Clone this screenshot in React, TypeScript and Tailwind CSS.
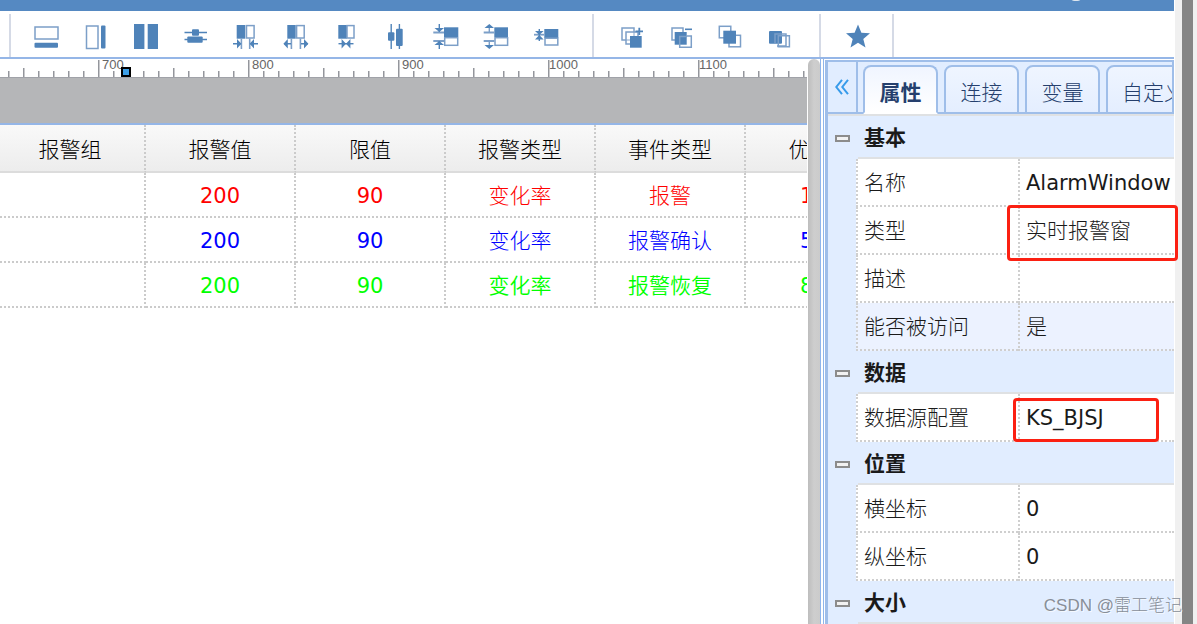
import type { ReactNode } from "react"

const BLUE = "#4f83b9"
const PALE = "#7c9fc8"

const UI_FONT = "font-['DejaVu_Sans','Noto_Sans_CJK_SC',sans-serif]"

type Tool = { name: string; art: ReactNode }

function Outline({ x, y, w, h }: { x: number; y: number; w: number; h: number }) {
  return <rect x={x} y={y} width={w} height={h} fill="#fff" fillOpacity={0.4} stroke={PALE} strokeWidth={1.5} />
}

const ALIGN_TOOLS: Tool[] = [
  {
    name: "等宽",
    art: (
      <>
        <Outline x={2} y={3} w={23} h={12} />
        <rect x={1.5} y={18.7} width={23.5} height={5} rx={1} />
      </>
    ),
  },
  {
    name: "等高",
    art: (
      <>
        <Outline x={3.5} y={2} w={11.5} h={22.5} />
        <rect x={18} y={1.5} width={4.5} height={23} rx={1} />
      </>
    ),
  },
  {
    name: "等大小",
    art: (
      <>
        <rect x={1} y={0} width={10.4} height={25} />
        <rect x={14.7} y={0} width={10.3} height={25} />
      </>
    ),
  },
  {
    name: "水平居中",
    art: (
      <>
        <path d="M1.5 8.5H24M1.5 15.5H24" stroke={BLUE} strokeWidth={1.4} />
        <rect x={9} y={5.3} width={7} height={6.4} rx={1} />
        <rect x={4.3} y={12.5} width={15.4} height={6.2} rx={1} />
      </>
    ),
  },
  {
    name: "水平等间距",
    art: (
      <>
        <rect x={3.7} y={1} width={8.6} height={13.7} />
        <Outline x={13.5} y={1.6} w={7.6} h={12.4} />
        <path d="M8.4 14.5V25M16.7 14.5V25" stroke={PALE} strokeWidth={1.6} />
        <path d="M0 19.7H8M17.5 19.7H25" stroke={BLUE} strokeWidth={1.4} />
        <path d="M4 15L8.4 19.7L4 24.5ZM21 15L16.6 19.7L21 24.5Z" />
      </>
    ),
  },
  {
    name: "增加水平间距",
    art: (
      <>
        <rect x={4.3} y={1} width={8.4} height={13.7} />
        <Outline x={13.6} y={1.6} w={7.6} h={12.4} />
        <path d="M8.4 14.5V25M17.4 14.5V25" stroke={PALE} strokeWidth={1.6} />
        <path d="M1 19.7H8M18 19.7H25" stroke={BLUE} strokeWidth={1.4} />
        <path d="M4.8 15L.4 19.7L4.8 24.5ZM21 15L25.4 19.7L21 24.5Z" />
      </>
    ),
  },
  {
    name: "减少水平间距",
    art: (
      <>
        <rect x={5.3} y={1} width={8.6} height={13.7} />
        <Outline x={14} y={1.6} w={7} h={12.4} />
        <path d="M5.5 19.7H20.5" stroke={BLUE} strokeWidth={1.4} />
        <path d="M8.6 15L13 19.7L8.6 24.5ZM17.4 15L13 19.7L17.4 24.5Z" />
      </>
    ),
  },
  {
    name: "垂直居中",
    art: (
      <>
        <path d="M8.2 0V25M16.4 0V25" stroke={BLUE} strokeWidth={1.4} />
        <rect x={5} y={8.3} width={6.4} height={8.4} rx={1} />
        <rect x={13} y={4.7} width={6.7} height={17.3} rx={1} />
      </>
    ),
  },
  {
    name: "垂直等间距",
    art: (
      <>
        <rect x={11} y={3.3} width={14.3} height={9.7} />
        <Outline x={11.7} y={13.7} w={13} h={7.6} />
        <path d="M.3 8.5H11M.3 17H11" stroke={PALE} strokeWidth={1.8} />
        <path d="M6.3 0V8M6.3 17V25" stroke={BLUE} strokeWidth={1.4} />
        <path d="M1.5 4L6.3 8L11 4ZM1.5 21L6.3 17L11 21Z" />
      </>
    ),
  },
  {
    name: "增加垂直间距",
    art: (
      <>
        <rect x={11.3} y={3.3} width={13.7} height={9.7} />
        <Outline x={12} y={13.7} w={12.6} h={7.6} />
        <path d="M.7 8.5H11.3M.7 17H11.3" stroke={PALE} strokeWidth={1.8} />
        <path d="M6.3 1V8M6.3 17V24" stroke={PALE} strokeWidth={1.4} />
        <path d="M1.5 4L6.3 0L11 4ZM1.5 21L6.3 25L11 21Z" />
      </>
    ),
  },
  {
    name: "减少垂直间距",
    art: (
      <>
        <rect x={11.3} y={5} width={14} height={9} />
        <Outline x={12} y={14.2} w={12.8} h={6.8} />
        <path d="M1 10.7H11" stroke={PALE} strokeWidth={1.8} />
        <path d="M6.3 5V17" stroke={BLUE} strokeWidth={1.4} />
        <path d="M2 7L6.3 11L10.6 7ZM2 15.5L6.3 11L10.6 15.5Z" />
      </>
    ),
  },
]

const LAYER_TOOLS: Tool[] = [
  {
    name: "组合",
    art: (
      <>
        <Outline x={3} y={4} w={12} h={12} />
        <Outline x={7} y={8} w={12} h={12} />
        <rect x={11} y={12} width={11.7} height={11.7} />
        <path d="M16.5 7.3H24M20.3 3.7V11" stroke={BLUE} strokeWidth={1.8} />
      </>
    ),
  },
  {
    name: "取消组合",
    art: (
      <>
        <Outline x={4} y={4} w={11} h={12} />
        <rect x={6.7} y={8} width={12} height={12.7} />
        <path d="M18.7 12H23.3V23.3H11.7V20.5M11.7 20V12.5H18.7" fill="none" stroke={PALE} strokeWidth={1.5} />
        <path d="M17 5.3H24" stroke={BLUE} strokeWidth={1.6} />
      </>
    ),
  },
  {
    name: "上移一层",
    art: (
      <>
        <Outline x={2.3} y={2.3} w={11.5} h={11.5} />
        <Outline x={12} y={11.3} w={11.5} h={11.5} />
        <rect x={6.3} y={6.7} width={12.7} height={13} />
      </>
    ),
  },
  {
    name: "下移一层",
    art: (
      <>
        <rect x={3} y={7} width={13} height={12.7} rx={1} />
        <path d="M9 19.5V10H20V22H11" fill="none" stroke={PALE} strokeWidth={1.5} />
        <path d="M12.3 19V11.7H23.4V22.8H12.3V19" fill="none" stroke={PALE} strokeWidth={1.5} />
      </>
    ),
  },
]

const STAR: Tool = {
  name: "收藏",
  art: <path d="M13 .5L16.4 8.8L25 9.3L18.3 15L20.5 23.5L13 18.8L5.5 23.5L7.7 15L1 9.3L9.6 8.8Z" />,
}

function ToolIcon({ tool, wide }: { tool: Tool; wide?: boolean }) {
  return (
    <button aria-label={tool.name} className={`flex shrink-0 justify-center pt-2.5 ${wide ? "w-[50px]" : "w-[49px]"}`}>
      <svg viewBox="0 0 26 26" className="size-[26px]" fill={BLUE}>
        {tool.art}
      </svg>
    </button>
  )
}

function Divider() {
  return <div className="w-0.5 shrink-0 bg-[#d5dae6]" />
}

function Toolbar() {
  return (
    <div className="flex h-[48px] shrink-0 border-b-2 border-[#95b6e7] bg-white pt-[3px] pl-[9px]">
      <Divider />
      <div className="ml-2.5 flex">
        {ALIGN_TOOLS.map((t) => (
          <ToolIcon key={t.name} tool={t} wide />
        ))}
      </div>
      <div className="ml-[21px] flex">
        <Divider />
      </div>
      <div className="mr-4 ml-[13px] flex">
        {LAYER_TOOLS.map((t) => (
          <ToolIcon key={t.name} tool={t} />
        ))}
      </div>
      <Divider />
      <div className="mr-[9px] ml-3 flex">
        <ToolIcon tool={STAR} wide />
      </div>
      <Divider />
    </div>
  )
}

const MAJOR = [-51, 99, 249, 399, 549, 699]
const STEPS = [0, 1, 2, 3, 4, 5, 6, 7, 8, 9]

function Ruler() {
  return (
    <svg className="block h-[19px] w-full shrink-0 bg-white" role="img" aria-label="标尺">
      {MAJOR.map((x, n) => (
        <g key={x}>
          {STEPS.map((i) => (
            <rect
              key={i}
              x={x + i * 15 - 1}
              y={i === 0 ? 1 : i === 5 ? 9 : 12}
              width={1.5}
              height={18}
              fill="#94969c"
            />
          ))}
          {n > 0 && (
            <text
              x={n > 3 ? x : x + 3}
              y={10}
              fontSize={13}
              fill="#666"
              className="font-['Liberation_Sans',Arial,sans-serif]"
            >
              {600 + n * 100}
            </text>
          )}
        </g>
      ))}
      <rect x={0} y={18} width="100%" height={1} fill="#a0a2a8" />
      <rect x={122} y={9} width={8} height={8} fill="#3d9fe6" stroke="#000" strokeWidth={2} />
    </svg>
  )
}

const COLUMNS = ["报警组", "报警值", "限值", "报警类型", "事件类型", "优先级"]

const ALARMS = [
  { color: "text-[#ff0000]", weight: "font-light", cells: ["", "200", "90", "变化率", "报警", "100"] },
  { color: "text-[#0000ff]", weight: "font-light", cells: ["", "200", "90", "变化率", "报警确认", "500"] },
  { color: "text-[#00ff00]", weight: "font-[350]", cells: ["", "200", "90", "变化率", "报警恢复", "800"] },
]

// latin text stays at regular weight, only the chinese text is light
const isLatin = (s: string) => /^\w+$/.test(s)

function AlarmTable() {
  return (
    <table className="w-[896px] table-fixed border-separate border-spacing-0 border-t-2 border-[#95b6e7] text-center text-[21px] leading-6">
      <colgroup>
        <col className="w-[146px]" />
      </colgroup>
      <thead className="bg-linear-to-b from-[#f9f9f9] to-[#ececec]">
        <tr>
          {COLUMNS.map((c) => (
            <th
              key={c}
              className="h-[48px] border-r-2 border-b-2 border-r-[#cbcbcb] border-b-[#dcdcdc] p-0 pt-1 font-light text-black [border-right-style:dotted] first:pr-1"
            >
              {c}
            </th>
          ))}
        </tr>
      </thead>
      <tbody>
        {ALARMS.map((row) => (
          <tr key={row.color} className={row.color}>
            {row.cells.map((cell, i) => (
              <td
                key={i}
                className={`h-[45px] border-r-2 border-b-2 border-dotted border-[#cbcbcb] p-0 pt-0.5 ${
                  isLatin(cell) ? "font-normal" : row.weight
                }`}
              >
                {cell}
              </td>
            ))}
          </tr>
        ))}
      </tbody>
    </table>
  )
}

const TABS = ["属性", "连接", "变量", "自定义"]

const SECTIONS = [
  {
    title: "基本",
    rows: [
      ["名称", "AlarmWindow"],
      ["类型", "实时报警窗"],
      ["描述", ""],
      ["能否被访问", "是"],
    ],
  },
  { title: "数据", rows: [["数据源配置", "KS_BJSJ"]] },
  {
    title: "位置",
    rows: [
      ["横坐标", "0"],
      ["纵坐标", "0"],
    ],
  },
  { title: "大小", rows: [] },
]

function TabStrip() {
  return (
    <div className="flex h-[52px] shrink-0 bg-[#9fbee9] pr-0.5 pb-0.5">
      <button aria-label="收起" className="flex w-7 shrink-0 items-center justify-center bg-[#e1edff]">
        <svg viewBox="0 0 14 16" className="h-4 w-3.5" fill="none" stroke="#379bea" strokeWidth={2}>
          <path d="M7 .8L1.3 8L7 15.2M13 .8L7.3 8L13 15.2" />
        </svg>
      </button>
      <div className="-mb-0.5 ml-0.5 flex min-w-0 flex-1 gap-1.5 overflow-hidden bg-[#e1edff] pt-[3px] pl-[5px] shadow-[inset_0_-2px_#9fbee9]">
        {TABS.map((t, i) => (
          <button
            key={t}
            className={`h-[49px] w-[75px] shrink-0 rounded-t-lg border-2 border-[#9fbee9] pt-1.5 text-[21px] leading-6 whitespace-nowrap text-[#253f6d] last:w-auto last:px-3.5 ${
              i === 0
                ? "border-b-white bg-linear-to-b from-[#f0f5ff] to-white font-bold"
                : "bg-linear-to-b from-[#eff5ff] to-[#e4eeff] font-light"
            }`}
          >
            {t}
          </button>
        ))}
      </div>
    </div>
  )
}

function PropertyPanel() {
  return (
    <aside className="mt-px flex min-w-0 flex-1 flex-col overflow-hidden border-t-2 border-l-3 border-[#9fbee9] bg-[#e1edff]">
      <TabStrip />
      <div className="border-t-2 border-[#dfe1e3]">
        {SECTIONS.map((s) => (
          <section key={s.title}>
            <button className="flex h-[43px] w-full items-center text-left">
              <span className="mt-0.5 ml-[7px] h-[7px] w-[15px] shrink-0 border-2 border-[#8c8c8c] bg-[#f2f2f2]" />
              <span className="ml-2 flex h-full flex-1 items-center border-b-2 border-[#dfe1e3] pt-0.5 pl-1.5 text-[21px] leading-6 font-bold text-[#1a1a1a]">
                {s.title}
              </span>
            </button>
            <div className="pl-7">
              <table className="w-full table-fixed border-separate border-spacing-0">
                <colgroup>
                  <col className="w-[162px]" />
                </colgroup>
                <tbody>
                  {s.rows.map(([label, value]) => (
                    <tr key={label} className={label === "能否被访问" ? "bg-[#ecf2ff]" : "bg-white"}>
                      <th className="h-12 border-b-2 border-l-2 border-dotted border-[#cfcfcf] p-0 pt-0.5 pl-1.5 text-left text-[21px] leading-6 font-light text-[#1a1a1a]">
                        {label}
                      </th>
                      <td
                        className={`border-b-2 border-l-2 border-dotted border-[#cfcfcf] p-0 pt-0.5 pl-1.5 text-[21px] leading-6 text-[#1a1a1a] ${
                          isLatin(value) ? "font-normal" : "font-light"
                        }`}
                      >
                        {value}
                      </td>
                    </tr>
                  ))}
                </tbody>
              </table>
            </div>
          </section>
        ))}
      </div>
    </aside>
  )
}

export default function App() {
  return (
    <div className={`relative flex h-screen overflow-hidden bg-[#f0f0f0] ${UI_FONT}`}>
      <div className="flex min-w-0 flex-1 flex-col bg-white">
        <header className="relative h-[11px] shrink-0 overflow-hidden bg-[#5589c2]">
          <span className="absolute -top-2 right-[92px] h-[9px] w-3 rounded-full bg-[#dfe6ee]" />
        </header>
        <Toolbar />
        <div className="flex min-h-0 flex-1">
          <main className="flex min-w-0 flex-[0_1_807px] flex-col overflow-hidden">
            <Ruler />
            <div className="h-[45px] shrink-0 bg-[#b5b6b8]" />
            <AlarmTable />
          </main>
          <div className="ml-px w-3 shrink-0 rounded-t-lg bg-linear-to-r from-[#bdbdbd] via-[#cecece] to-[#cbcbcb]" />
          <div className="mr-px w-1 shrink-0 border-x border-[#8fb5ea] bg-white" />
          <PropertyPanel />
        </div>
      </div>
      <div className="w-px shrink-0 bg-white" />
      <div className="mr-1 ml-[7px] w-[11px] shrink-0 bg-[#858585]" />

      {/* callouts drawn over the property values */}
      <div className="absolute top-[205px] right-[19px] h-14 w-[171px] rounded-sm border-3 border-[#fb2012]" />
      <div className="absolute top-[398px] right-[38px] h-11 w-[146px] rounded-sm border-3 border-[#fb2012]" />
      <p className="absolute right-[15px] bottom-1.5 text-[17px] leading-6 font-light whitespace-nowrap text-[#888e98] [text-shadow:1px_1px_0_#ffffffb0] font-['Liberation_Sans','Noto_Sans_CJK_SC',sans-serif]">
        CSDN @雷工笔记
      </p>
    </div>
  )
}
